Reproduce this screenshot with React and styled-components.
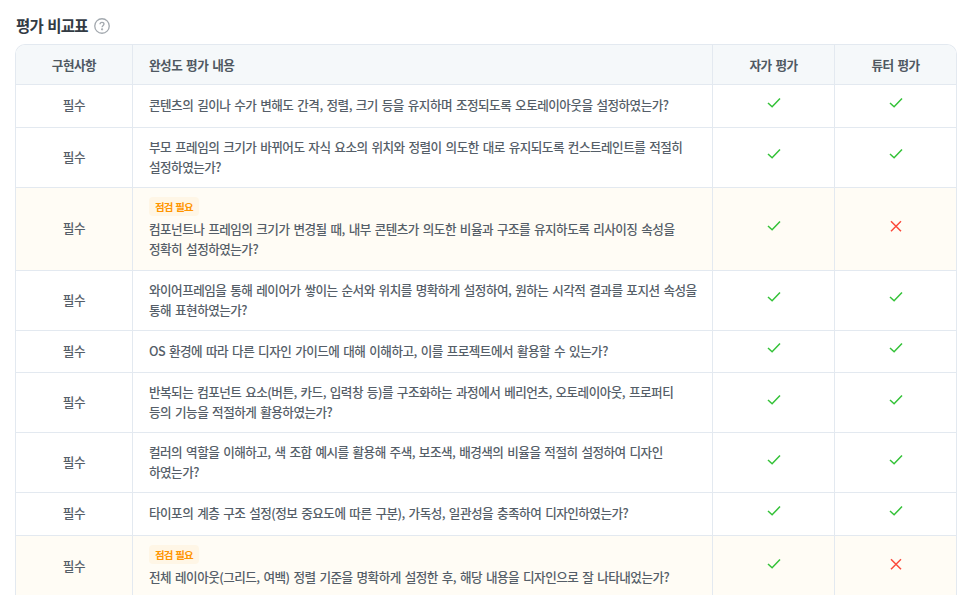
import React from 'react'
import styled, { createGlobalStyle } from 'styled-components'

const GlobalStyle = createGlobalStyle`
  html, body {
    margin: 0;
    height: 595px;
    overflow: hidden;
    background: #fff;
    font-family: "Noto Sans CJK KR", "Noto Sans", sans-serif;
  }
`

const rows = [
  { lines: ['콘텐츠의 길이나 수가 변해도 간격, 정렬, 크기 등을 유지하며 조정되도록 오토레이아웃을 설정하였는가?'] },
  { lines: ['부모 프레임의 크기가 바뀌어도 자식 요소의 위치와 정렬이 의도한 대로 유지되도록 컨스트레인트를 적절히', '설정하였는가?'] },
  { lines: ['컴포넌트나 프레임의 크기가 변경될 때, 내부 콘텐츠가 의도한 비율과 구조를 유지하도록 리사이징 속성을', '정확히 설정하였는가?'], flagged: true },
  { lines: ['와이어프레임을 통해 레이어가 쌓이는 순서와 위치를 명확하게 설정하여, 원하는 시각적 결과를 포지션 속성을', '통해 표현하였는가?'] },
  { lines: ['OS 환경에 따라 다른 디자인 가이드에 대해 이해하고, 이를 프로젝트에서 활용할 수 있는가?'] },
  { lines: ['반복되는 컴포넌트 요소(버튼, 카드, 입력창 등)를 구조화하는 과정에서 베리언츠, 오토레이아웃, 프로퍼티', '등의 기능을 적절하게 활용하였는가?'] },
  { lines: ['컬러의 역할을 이해하고, 색 조합 예시를 활용해 주색, 보조색, 배경색의 비율을 적절히 설정하여 디자인', '하였는가?'] },
  { lines: ['타이포의 계층 구조 설정(정보 중요도에 따른 구분), 가독성, 일관성을 충족하여 디자인하였는가?'] },
  { lines: ['전체 레이아웃(그리드, 여백) 정렬 기준을 명확하게 설정한 후, 해당 내용을 디자인으로 잘 나타내었는가?'], flagged: true },
]

const Page = styled.div`
  padding: 14px 15px 0 15px;
  width: 972px;
  box-sizing: border-box;
`

const TitleRow = styled.div`
  display: flex;
  align-items: center;
  gap: 6px;
  height: 22px;
  margin-bottom: 8px;
`

const Title = styled.h2`
  margin: 0 0 0 1px;
  font-size: 15.5px;
  line-height: 22px;
  font-weight: 700;
  letter-spacing: -0.76px;
  word-spacing: 1.5px;
  color: #333b44;
`

const Table = styled.div`
  width: 942px;
  box-sizing: border-box;
  border: 1px solid #e3e9f0;
  border-bottom: none;
  border-radius: 10px 10px 0 0;
  overflow: hidden;
`

const Row = styled.div`
  display: grid;
  grid-template-columns: 116px 580px 122px 1fr;
  min-height: 41.6px;
  background: ${p => (p.$flagged ? '#fffcf5' : '#fff')};
  border-bottom: 1px solid #e3e9f0;
`

const HeadRow = styled(Row)`
  background: #f5f8fa;
  height: 40px;
  min-height: 0;
  box-sizing: border-box;
`

const Cell = styled.div`
  display: flex;
  align-items: center;
  justify-content: center;
  border-left: 1px solid #e3e9f0;
  &:first-child {
    border-left: none;
  }
`

const HeadCell = styled(Cell)`
  font-size: 12.6px;
  font-weight: 700;
  letter-spacing: -0.5px;
  word-spacing: 1.5px;
  color: #4f5862;
`

const HeadText = styled(HeadCell)`
  justify-content: flex-start;
  padding-left: 16px;
`

const KindCell = styled(Cell)`
  font-size: 12.6px;
  font-weight: 500;
  letter-spacing: -0.3px;
  color: #555e68;
  padding-bottom: 2px;
`

const ContentCell = styled(Cell)`
  flex-direction: column;
  align-items: flex-start;
  justify-content: center;
  padding: ${p => (p.$flagged ? '9px 16px 11px' : '9px 16px 10px')};
`

const Badge = styled.span`
  height: 19px;
  line-height: 19px;
  padding: 0 6px;
  border-radius: 4px;
  background: #fff6e6;
  color: #ff9500;
  font-size: 10.5px;
  font-weight: 700;
  letter-spacing: -0.85px;
  word-spacing: 1px;
  margin-bottom: 3px;
`

const Line = styled.div`
  font-size: 12.6px;
  line-height: 20px;
  font-weight: 500;
  letter-spacing: -0.53px;
  word-spacing: 1.6px;
  color: #555e68;
  white-space: nowrap;
`

const Mark = styled.svg`
  width: 16px;
  height: 16px;
  margin-top: -6px;
  fill: none;
  stroke: ${p => p.$color};
  stroke-width: 1.5;
`

const HelpMark = styled.svg`
  width: 16px;
  height: 16px;
  margin-top: 1px;
  fill: none;
  stroke: #a3a9af;
  stroke-width: 1.4;
`

const CheckIcon = () => (
  <Mark $color="#34c238" viewBox="0 0 16 16">
    <path d="M2 8 L6.1 11.8 L14 3.6" />
  </Mark>
)

const CrossIcon = () => (
  <Mark $color="#fb4b3c" viewBox="0 0 16 16">
    <path d="M3 3.2 L13 13.2 M13 3.2 L3 13.2" />
  </Mark>
)

const HelpIcon = () => (
  <HelpMark viewBox="0 0 17 17">
    <circle cx="8.5" cy="8.5" r="7.7" />
    <path d="M6.4 6.7 C6.4 5.4 7.4 4.7 8.5 4.7 C9.7 4.7 10.6 5.5 10.6 6.5 C10.6 7.9 8.6 8 8.6 9.9" />
    <circle cx="8.6" cy="12" r="0.5" />
  </HelpMark>
)

export default function App() {
  return (
    <Page>
      <GlobalStyle />
      <TitleRow>
        <Title>평가 비교표</Title>
        <HelpIcon />
      </TitleRow>
      <Table>
        <HeadRow>
          <HeadCell>구현사항</HeadCell>
          <HeadText>완성도 평가 내용</HeadText>
          <HeadCell>자가 평가</HeadCell>
          <HeadCell>튜터 평가</HeadCell>
        </HeadRow>
        {rows.map((row, i) => (
          <Row key={i} $flagged={row.flagged}>
            <KindCell>필수</KindCell>
            <ContentCell $flagged={row.flagged}>
              {row.flagged && <Badge>점검 필요</Badge>}
              {row.lines.map(line => (
                <Line key={line}>{line}</Line>
              ))}
            </ContentCell>
            <Cell><CheckIcon /></Cell>
            <Cell>{row.flagged ? <CrossIcon /> : <CheckIcon />}</Cell>
          </Row>
        ))}
      </Table>
    </Page>
  )
}
